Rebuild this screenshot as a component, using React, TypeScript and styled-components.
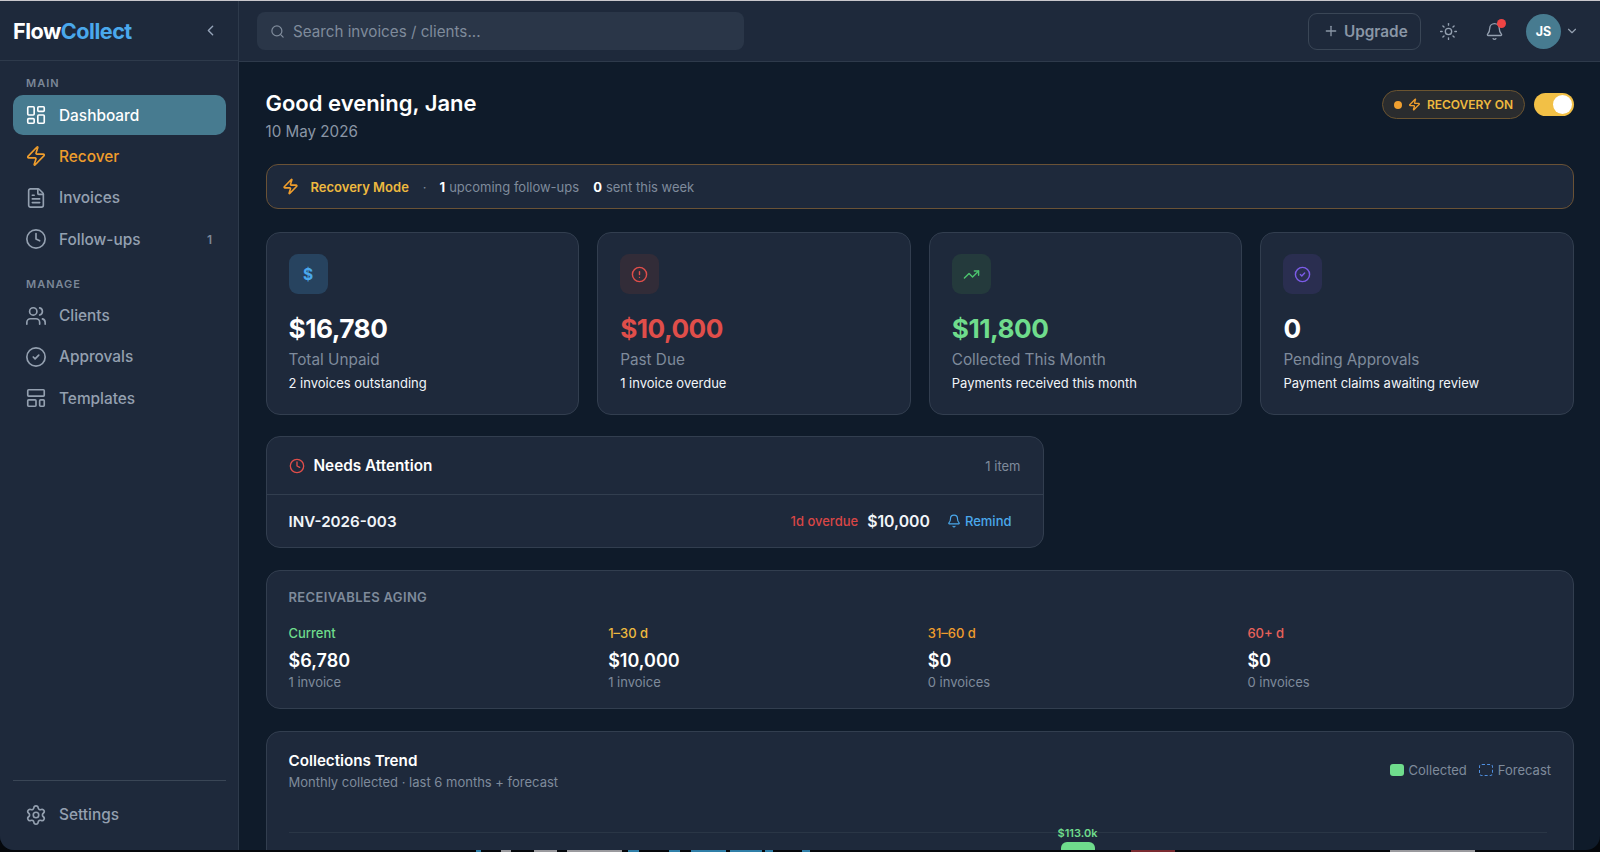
import styled, { createGlobalStyle } from 'styled-components';
import {
  AlertCircle,
  Bell,
  CheckCircle2,
  ChevronDown,
  ChevronLeft,
  CircleCheck,
  Clock,
  FileText,
  LayoutDashboard,
  LayoutTemplate,
  Plus,
  Search,
  Settings,
  Sun,
  TrendingUp,
  Users,
  Zap,
} from 'lucide-react';

const GlobalStyle = createGlobalStyle`
  html, body {
    margin: 0;
    height: 100%;
    background: #05080c;
    overflow: hidden;
    font-family: Inter, "Liberation Sans", sans-serif;
  }
  * { box-sizing: border-box; }
`;

const Window = styled.div`
  display: flex;
  width: 1600px;
  height: 850px;
  overflow: hidden;
  background: #0f1b2a;
  border-top: 1px solid #c9c7cc;
  border-radius: 0 0 14px 14px;
`;

const DockEdge = styled.div`
  display: flex;
  height: 2px;
`;

const DockPiece = styled.span<{ $gap: number; $width: number; $color: string }>`
  flex: 0 0 ${({ $width }) => $width}px;
  margin-left: ${({ $gap }) => $gap}px;
  background: ${({ $color }) => $color};
`;

const Sidebar = styled.aside`
  display: flex;
  flex-direction: column;
  flex: 0 0 239px;
  background: #1e293b;
  border-right: 1px solid #2e3a4b;
`;

const Brand = styled.div`
  display: flex;
  align-items: center;
  justify-content: space-between;
  height: 60px;
  padding: 0 19px 0 13px;
  border-bottom: 1px solid #2e3a4b;
  color: #94a3b8;
`;

const Logo = styled.div`
  font-size: 21.6px;
  font-weight: 700;
  letter-spacing: -0.5px;
  color: #fff;
  span { color: #4aa8ec; }
`;

const Nav = styled.nav`
  display: flex;
  flex-direction: column;
  flex: 1;
  padding: 15px 12px 14px 13px;
`;

const NavLabel = styled.div<{ $top?: number }>`
  margin: ${({ $top }) => $top ?? 0}px 0 5px 13px;
  font-size: 11px;
  line-height: 14px;
  font-weight: 600;
  letter-spacing: 1px;
  color: #7b8797;
`;

const NavItem = styled.div<{ $active?: boolean; $color?: string }>`
  display: flex;
  align-items: center;
  gap: 12px;
  height: 40px;
  margin-bottom: 1.4px;
  padding: 0 14px 0 12px;
  border-radius: 10px;
  font-size: 15.4px;
  font-weight: 500;
  color: ${({ $active, $color }) => ($active ? '#fff' : $color ?? '#94a0b0')};
  background: ${({ $active }) => ($active ? '#477b90' : 'transparent')};
`;

const NavCount = styled.span`
  margin-left: auto;
  font-size: 12px;
  font-weight: 600;
  color: #7b8797;
`;

const NavFooter = styled.div`
  margin-top: auto;
  padding-top: 14px;
  border-top: 1px solid #3a4656;
`;

const Content = styled.div`
  display: flex;
  flex-direction: column;
  flex: 1;
  min-width: 0;
`;

const TopBar = styled.header`
  display: flex;
  align-items: center;
  flex: 0 0 61px;
  padding: 0 21px 0 18px;
  background: #1e293b;
  border-bottom: 1px solid #2e3a4b;
`;

const SearchBox = styled.div`
  display: flex;
  align-items: center;
  gap: 8px;
  width: 487px;
  height: 38px;
  padding: 0 13px;
  border-radius: 8px;
  background: #2a3648;
  font-size: 15.2px;
  color: #7f8b9b;
`;

const TopActions = styled.div`
  display: flex;
  align-items: center;
  margin-left: auto;
  color: #94a0b0;
`;

const UpgradeButton = styled.div`
  display: flex;
  align-items: center;
  gap: 5px;
  width: 113px;
  height: 37px;
  padding-left: 14px;
  margin-right: 18px;
  border: 1px solid #3a4656;
  border-radius: 9px;
  font-size: 15.3px;
  font-weight: 600;
  color: #8a96a6;
`;

const BellWrap = styled.div`
  position: relative;
  display: flex;
  margin: 0 22px 0 27px;
`;

const BellDot = styled.span`
  position: absolute;
  top: -3px;
  right: -2px;
  width: 9px;
  height: 9px;
  border-radius: 50%;
  background: #ef4444;
`;

const Avatar = styled.div`
  display: flex;
  align-items: center;
  justify-content: center;
  width: 35px;
  height: 35px;
  margin-right: 4px;
  border-radius: 50%;
  background: #477b90;
  font-size: 12.5px;
  font-weight: 700;
  color: #fff;
`;

const Main = styled.main`
  display: flex;
  flex-direction: column;
  flex: 1;
  min-height: 0;
  overflow: hidden;
  padding: 28px 26px 0 26.5px;
`;

const Heading = styled.div`
  display: flex;
  align-items: flex-start;
  justify-content: space-between;
  margin-bottom: 22px;
`;

const Greeting = styled.h1`
  margin: 0;
  font-size: 22px;
  line-height: 26px;
  font-weight: 600;
  color: #fff;
`;

const DateText = styled.div`
  margin-top: 6px;
  font-size: 15.2px;
  line-height: 20px;
  color: #8a96a6;
`;

const RecoveryControls = styled.div`
  display: flex;
  align-items: center;
  gap: 9px;
`;

const RecoveryPill = styled.div`
  display: flex;
  align-items: center;
  gap: 6px;
  height: 29px;
  padding: 0 11px;
  border: 1px solid #6b5430;
  border-radius: 15px;
  background: #2a2c2e;
  font-size: 12px;
  font-weight: 600;
  color: #eeb93f;
`;

const PillDot = styled.span`
  width: 8px;
  height: 8px;
  border-radius: 50%;
  background: #f0a030;
`;

const Toggle = styled.div`
  display: flex;
  justify-content: flex-end;
  align-items: center;
  width: 40px;
  height: 23px;
  padding: 2px;
  border-radius: 12px;
  background: #f2c046;
  &::after {
    content: '';
    width: 19px;
    height: 19px;
    border-radius: 50%;
    background: #fff;
  }
`;

const RecoveryBar = styled.div`
  display: flex;
  align-items: center;
  flex: 0 0 45px;
  padding: 0 15px;
  margin-bottom: 23px;
  border: 1px solid #6a5236;
  border-radius: 12px;
  background: #1e293b;
  font-size: 13px;
  color: #7f8b9b;
  b { font-weight: 700; color: #fff; }
`;

const RecoveryTitle = styled.span`
  margin-left: 12px;
  font-weight: 600;
  color: #eeb93f;
`;

const Dot = styled.span`
  margin: 0 13px 0 14px;
`;

const Stat = styled.span`
  margin-right: 14px;
  b { margin-right: 4px; }
`;

const CardGrid = styled.div`
  display: grid;
  grid-template-columns: repeat(4, 1fr);
  gap: 18px;
  margin-bottom: 21px;
`;

const Card = styled.div`
  background: #1e293b;
  border: 1px solid #323e4f;
  border-radius: 14px;
`;

const StatCard = styled(Card)`
  height: 183px;
  padding: 21px 22px 0;
`;

const IconTile = styled.div<{ $bg: string; $color: string }>`
  display: flex;
  align-items: center;
  justify-content: center;
  width: 39px;
  height: 40px;
  border-radius: 9px;
  font-size: 15.5px;
  font-weight: 700;
  background: ${({ $bg }) => $bg};
  color: ${({ $color }) => $color};
`;

const StatValue = styled.div<{ $color?: string }>`
  margin-top: 18px;
  font-size: 26.2px;
  line-height: 34px;
  font-weight: 700;
  letter-spacing: -0.5px;
  color: ${({ $color }) => $color ?? '#fff'};
`;

const StatLabel = styled.div`
  margin-top: 5px;
  font-size: 15.3px;
  line-height: 18px;
  color: #7f8b9b;
`;

const StatNote = styled.div`
  margin-top: 5px;
  font-size: 13px;
  line-height: 18px;
  color: #f1f5f9;
`;

const AttentionCard = styled(Card)`
  width: 778px;
  margin-bottom: 22px;
`;

const AttentionHead = styled.div`
  display: flex;
  align-items: center;
  height: 58px;
  padding: 0 22px;
  border-bottom: 1px solid #323e4f;
`;

const AttentionTitle = styled.div`
  margin-left: 9px;
  font-size: 15.3px;
  font-weight: 600;
  color: #fff;
`;

const ItemCount = styled.div`
  margin-left: auto;
  font-size: 13px;
  color: #7f8b9b;
`;

const AttentionRow = styled.div`
  display: flex;
  align-items: center;
  height: 52px;
  padding: 0 31px 0 22px;
`;

const InvoiceId = styled.div`
  font-size: 15.2px;
  font-weight: 600;
  color: #f1f5f9;
`;

const Overdue = styled.div`
  margin-left: auto;
  font-size: 13px;
  font-weight: 500;
  color: #d84646;
`;

const Amount = styled.div`
  margin: 0 17px 0 9px;
  font-size: 15.8px;
  font-weight: 600;
  color: #f1f5f9;
`;

const Remind = styled.div`
  display: flex;
  align-items: center;
  gap: 4px;
  font-size: 13px;
  font-weight: 500;
  color: #4aa8ec;
`;

const AgingCard = styled(Card)`
  flex: 0 0 139px;
  padding: 18px 22px 0;
  margin-bottom: 22px;
`;

const AgingTitle = styled.div`
  font-size: 13px;
  line-height: 16px;
  font-weight: 600;
  letter-spacing: 0.35px;
  color: #7f8b9b;
`;

const AgingGrid = styled.div`
  display: grid;
  grid-template-columns: repeat(4, 1fr);
  gap: 16px;
  margin-top: 20px;
`;

const AgingLabel = styled.div<{ $color: string }>`
  font-size: 13px;
  line-height: 16px;
  font-weight: 500;
  color: ${({ $color }) => $color};
`;

const AgingAmount = styled.div`
  margin-top: 8px;
  font-size: 18px;
  line-height: 24px;
  font-weight: 600;
  color: #fff;
`;

const AgingCount = styled.div`
  margin-top: 1px;
  font-size: 13px;
  line-height: 16px;
  color: #7f8b9b;
`;

const TrendCard = styled(Card)`
  flex: 0 0 auto;
  height: 200px;
  padding: 20px 22px 0;
`;

const TrendHead = styled.div`
  display: flex;
  align-items: center;
  justify-content: space-between;
  margin-bottom: 42px;
`;

const TrendTitle = styled.div`
  font-size: 15.2px;
  line-height: 18px;
  font-weight: 600;
  color: #fff;
`;

const TrendSub = styled.div`
  margin-top: 4px;
  font-size: 13px;
  line-height: 16px;
  color: #7f8b9b;
`;

const Legend = styled.div`
  display: flex;
  align-items: center;
  gap: 4.5px;
  margin-top: -2px;
  font-size: 13px;
  color: #7f8b9b;
`;

const Swatch = styled.span<{ $dashed?: boolean }>`
  width: 14px;
  height: 12px;
  margin-left: 8px;
  border-radius: 3px;
  ${({ $dashed }) =>
    $dashed ? 'border: 1.5px dashed #4f8fe0;' : 'background: #6fdc8c;'}
`;

const ChartArea = styled.div`
  position: relative;
  border-top: 1px solid #2a3646;
  margin-right: 4px;
`;

const BarColumn = styled.div`
  position: absolute;
  top: -7px;
  left: 769px;
  display: flex;
  flex-direction: column;
  align-items: center;
  width: 40px;
`;

const BarLabel = styled.div`
  font-size: 11px;
  line-height: 14px;
  font-weight: 600;
  white-space: nowrap;
  color: #6fdc8c;
`;

const Bar = styled.div`
  width: 34px;
  height: 40px;
  margin-top: 2px;
  border-radius: 6px 6px 0 0;
  background: #6fdc8c;
`;

const mainNav = [
  { label: 'Dashboard', icon: LayoutDashboard, active: true },
  { label: 'Recover', icon: Zap, color: '#ef9d2c' },
  { label: 'Invoices', icon: FileText },
  { label: 'Follow-ups', icon: Clock, count: 1 },
];

const manageNav = [
  { label: 'Clients', icon: Users },
  { label: 'Approvals', icon: CircleCheck },
  { label: 'Templates', icon: LayoutTemplate },
];

const stats = [
  { value: '$16,780', label: 'Total Unpaid', note: '2 invoices outstanding', glyph: '$', bg: '#27435f', tone: '#4aa8ec' },
  { value: '$10,000', label: 'Past Due', note: '1 invoice overdue', icon: AlertCircle, bg: '#322c38', tone: '#e04e4a', valueColor: '#e04e4a' },
  { value: '$11,800', label: 'Collected This Month', note: 'Payments received this month', icon: TrendingUp, bg: '#243a3c', tone: '#4cc46e', valueColor: '#6fdc8c' },
  { value: '0', label: 'Pending Approvals', note: 'Payment claims awaiting review', icon: CheckCircle2, bg: '#2a2e50', tone: '#7c5ce8' },
];

const aging = [
  { label: 'Current', color: '#6fdc8c', amount: '$6,780', count: '1 invoice' },
  { label: '1–30 d', color: '#eeb93f', amount: '$10,000', count: '1 invoice' },
  { label: '31–60 d', color: '#ef9d2c', amount: '$0', count: '0 invoices' },
  { label: '60+ d', color: '#e8615a', amount: '$0', count: '0 invoices' },
];

// what shows of the desktop under the window's bottom edge
const dockPieces = [
  { gap: 476, width: 5, color: '#2f7fa8' },
  { gap: 20, width: 10, color: '#9a9a9e' },
  { gap: 23, width: 23, color: '#9a9a9e' },
  { gap: 10, width: 55, color: '#9a9a9e' },
  { gap: 6, width: 11, color: '#2f7fa8' },
  { gap: 30, width: 11, color: '#2f7fa8' },
  { gap: 11, width: 35, color: '#2f7fa8' },
  { gap: 4, width: 32, color: '#2f7fa8' },
  { gap: 3, width: 8, color: '#2f7fa8' },
  { gap: 29, width: 8, color: '#2f7fa8' },
  { gap: 321, width: 44, color: '#7a2a30' },
  { gap: 215, width: 85, color: '#9a9a9e' },
];

export default function App() {
  return (
    <>
      <GlobalStyle />
      <Window>
        <Sidebar>
          <Brand>
            <Logo>
              Flow<span>Collect</span>
            </Logo>
            <ChevronLeft size={17} />
          </Brand>
          <Nav>
            <NavLabel>MAIN</NavLabel>
            {mainNav.map(({ label, icon: Icon, active, color, count }) => (
              <NavItem key={label} $active={active} $color={color}>
                <Icon size={22} strokeWidth={1.8} />
                {label}
                {count && <NavCount>{count}</NavCount>}
              </NavItem>
            ))}
            <NavLabel $top={16}>MANAGE</NavLabel>
            {manageNav.map(({ label, icon: Icon }) => (
              <NavItem key={label}>
                <Icon size={22} strokeWidth={1.8} />
                {label}
              </NavItem>
            ))}
            <NavFooter>
              <NavItem>
                <Settings size={22} strokeWidth={1.8} />
                Settings
              </NavItem>
            </NavFooter>
          </Nav>
        </Sidebar>
        <Content>
          <TopBar>
            <SearchBox>
              <Search size={15} />
              Search invoices / clients...
            </SearchBox>
            <TopActions>
              <UpgradeButton>
                <Plus size={16} />
                Upgrade
              </UpgradeButton>
              <Sun size={19} strokeWidth={1.7} />
              <BellWrap>
                <Bell size={19} strokeWidth={1.7} />
                <BellDot />
              </BellWrap>
              <Avatar>JS</Avatar>
              <ChevronDown size={14} />
            </TopActions>
          </TopBar>
          <Main>
            <Heading>
              <div>
                <Greeting>Good evening, Jane</Greeting>
                <DateText>10 May 2026</DateText>
              </div>
              <RecoveryControls>
                <RecoveryPill>
                  <PillDot />
                  <Zap size={13} color="#ef9d2c" strokeWidth={2.4} />
                  RECOVERY ON
                </RecoveryPill>
                <Toggle />
              </RecoveryControls>
            </Heading>
            <RecoveryBar>
              <Zap size={17} color="#ef9d2c" strokeWidth={2.3} />
              <RecoveryTitle>Recovery Mode</RecoveryTitle>
              <Dot>·</Dot>
              <Stat>
                <b>1</b>upcoming follow-ups
              </Stat>
              <Stat>
                <b>0</b>sent this week
              </Stat>
            </RecoveryBar>
            <CardGrid>
              {stats.map(({ value, label, note, icon: Icon, glyph, bg, tone, valueColor }) => (
                <StatCard key={label}>
                  <IconTile $bg={bg} $color={tone}>
                    {Icon ? <Icon size={17} /> : glyph}
                  </IconTile>
                  <StatValue $color={valueColor}>{value}</StatValue>
                  <StatLabel>{label}</StatLabel>
                  <StatNote>{note}</StatNote>
                </StatCard>
              ))}
            </CardGrid>
            <AttentionCard>
              <AttentionHead>
                <Clock size={16} color="#e04e4a" />
                <AttentionTitle>Needs Attention</AttentionTitle>
                <ItemCount>1 item</ItemCount>
              </AttentionHead>
              <AttentionRow>
                <InvoiceId>INV-2026-003</InvoiceId>
                <Overdue>1d overdue</Overdue>
                <Amount>$10,000</Amount>
                <Remind>
                  <Bell size={14} />
                  Remind
                </Remind>
              </AttentionRow>
            </AttentionCard>
            <AgingCard>
              <AgingTitle>RECEIVABLES AGING</AgingTitle>
              <AgingGrid>
                {aging.map(({ label, color, amount, count }) => (
                  <div key={label}>
                    <AgingLabel $color={color}>{label}</AgingLabel>
                    <AgingAmount>{amount}</AgingAmount>
                    <AgingCount>{count}</AgingCount>
                  </div>
                ))}
              </AgingGrid>
            </AgingCard>
            <TrendCard>
              <TrendHead>
                <div>
                  <TrendTitle>Collections Trend</TrendTitle>
                  <TrendSub>Monthly collected · last 6 months + forecast</TrendSub>
                </div>
                <Legend>
                  <Swatch />
                  Collected
                  <Swatch $dashed />
                  Forecast
                </Legend>
              </TrendHead>
              <ChartArea>
                <BarColumn>
                  <BarLabel>$113.0k</BarLabel>
                  <Bar />
                </BarColumn>
              </ChartArea>
            </TrendCard>
          </Main>
        </Content>
      </Window>
      <DockEdge>
        {dockPieces.map((piece, i) => (
          <DockPiece key={i} $gap={piece.gap} $width={piece.width} $color={piece.color} />
        ))}
      </DockEdge>
    </>
  );
}
